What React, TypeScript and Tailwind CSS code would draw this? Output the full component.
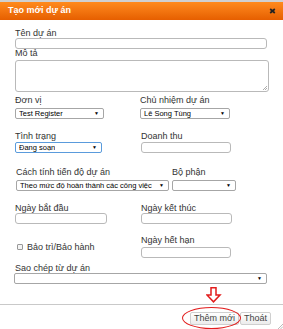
import { ReactNode } from "react";

function Label({ children, className = "" }: { children: ReactNode; className?: string }) {
  return (
    <div className={`h-[10px] whitespace-nowrap text-[9px] leading-[10px] text-[#333] ${className}`}>
      {children}
    </div>
  );
}

function TextBox({ className = "" }: { className?: string }) {
  return <div className={`h-[11px] rounded-[3px] border border-[#b9b9b9] bg-white ${className}`} />;
}

function Select({ value = "", className = "" }: { value?: string; className?: string }) {
  return (
    <div
      className={`flex h-[11px] items-center justify-between gap-[2px] overflow-hidden rounded-[2px] border border-[#a6a6a6] bg-white pl-[3px] pr-[4px] ${className}`}
    >
      <span className="min-w-0 overflow-hidden whitespace-nowrap text-[7.5px] leading-[9px] text-black">{value}</span>
      <span className="shrink-0 text-[5px] leading-[5px] text-black">▼</span>
    </div>
  );
}

export default function App() {
  return (
    <div className="relative h-[329px] w-[283px] overflow-hidden bg-white font-['Liberation_Sans',Arial,sans-serif]">
      <div className="h-[2px] bg-[#d0d0d0]" />
      <div className="flex h-[18px] items-center justify-between bg-gradient-to-b from-[#ff8a1c] to-[#e65f00] pl-[8px] pr-[6px]">
        <span className="text-[9px] font-bold text-white">Tạo mới dự án</span>
        <svg width="7" height="6" viewBox="0 0 7 6" className="mr-[1px]">
          <path d="M1.2 1 L5.8 5 M5.8 1 L1.2 5" stroke="#222" strokeWidth="1.7" />
        </svg>
      </div>

      <div className="px-[15px] pt-[8px]">
        <Label>Tên dự án</Label>
        <TextBox className="w-[252px]" />
        <Label className="mt-[-1px]">Mô tả</Label>
        <div className="relative mt-[2px] h-[32px] w-[254px] rounded-[3px] border border-[#b9b9b9]">
          <svg width="5" height="5" viewBox="0 0 5 5" className="absolute bottom-[1px] right-[1px]">
            <path d="M1 5 L5 1 M3 5 L5 3" stroke="#999" strokeWidth="0.8" />
          </svg>
        </div>

        <div className="mt-[3px] grid grid-cols-[125px_1fr]">
          <div>
            <Label>Đơn vị</Label>
            <Select value="Test Register" className="mt-[3px] w-[89px]" />
          </div>
          <div>
            <Label>Chủ nhiệm dự án</Label>
            <Select value="Lê Song Tùng" className="mt-[3px] w-[90px]" />
          </div>
        </div>

        <div className="mt-[12px] grid grid-cols-[126px_1fr]">
          <div>
            <Label>Tình trạng</Label>
            <Select value="Đang soạn" className="mt-[1px] w-[87px] !border-[#5a9bdc]" />
          </div>
          <div>
            <Label>Doanh thu</Label>
            <TextBox className="mt-[1px] w-[90px]" />
          </div>
        </div>

        <div className="mt-[14px] flex">
          <div className="ml-[1px]">
            <Label>Cách tính tiến độ dự án</Label>
            <Select value="Theo mức độ hoàn thành các công việc" className="mt-[3px] w-[153px]" />
          </div>
          <div className="ml-[3px]">
            <Label>Bộ phận</Label>
            <Select className="mt-[3px] w-[64px]" />
          </div>
        </div>

        <div className="mt-[12px] grid grid-cols-[126px_1fr]">
          <div>
            <Label>Ngày bắt đầu</Label>
            <TextBox className="w-[92px]" />
          </div>
          <div>
            <Label>Ngày kết thúc</Label>
            <TextBox className="w-[91px]" />
          </div>
        </div>

        <div className="mt-[11px] grid grid-cols-[126px_1fr]">
          <div className="flex items-center gap-[4px] pl-[2px] pt-[1px]">
            <span className="h-[6px] w-[6px] rounded-[1px] border border-[#999] bg-[#f4f4f4]" />
            <span className="text-[9px] leading-[10px] text-[#333]">Bảo trì/Bảo hành</span>
          </div>
          <div>
            <Label>Ngày hết hạn</Label>
            <TextBox className="mt-[2px] w-[90px]" />
          </div>
        </div>

        <Label className="mt-[5px]">Sao chép từ dự án</Label>
        <Select className="ml-[-1px] w-[253px]" />
      </div>

      <svg width="16" height="16" viewBox="0 0 16 16" className="absolute left-[206px] top-[287px]">
        <path d="M5 0.8 H10 V8 H14 L7.5 14.8 L1 8 H5 Z" fill="none" stroke="#e21c1c" strokeWidth="1.5" strokeLinejoin="miter" />
      </svg>

      <div className="mt-[20px] h-px bg-[#c9c9c9]" />

      <div className="mt-[7px] flex justify-end gap-[1px] pr-[12px]">
        <button className="h-[13px] w-[49px] rounded-[2px] border border-[#cfcfcf] bg-gradient-to-b from-white to-[#ececec] text-[9px] leading-[11px] text-[#444]">
          Thêm mới
        </button>
        <button className="h-[13px] w-[31px] rounded-[2px] border border-[#cfcfcf] bg-gradient-to-b from-white to-[#ececec] text-[9px] leading-[11px] text-[#444]">
          Thoát
        </button>
      </div>

      <div className="absolute left-[182px] top-[307px] h-[22px] w-[59px] rounded-[50%] border-[1.5px] border-[#e21c1c]" />

      <svg width="6" height="6" viewBox="0 0 6 6" className="absolute bottom-0 right-0">
        <path d="M1 6 L6 1 M3.5 6 L6 3.5" stroke="#aaa" strokeWidth="0.8" />
      </svg>
    </div>
  );
}
